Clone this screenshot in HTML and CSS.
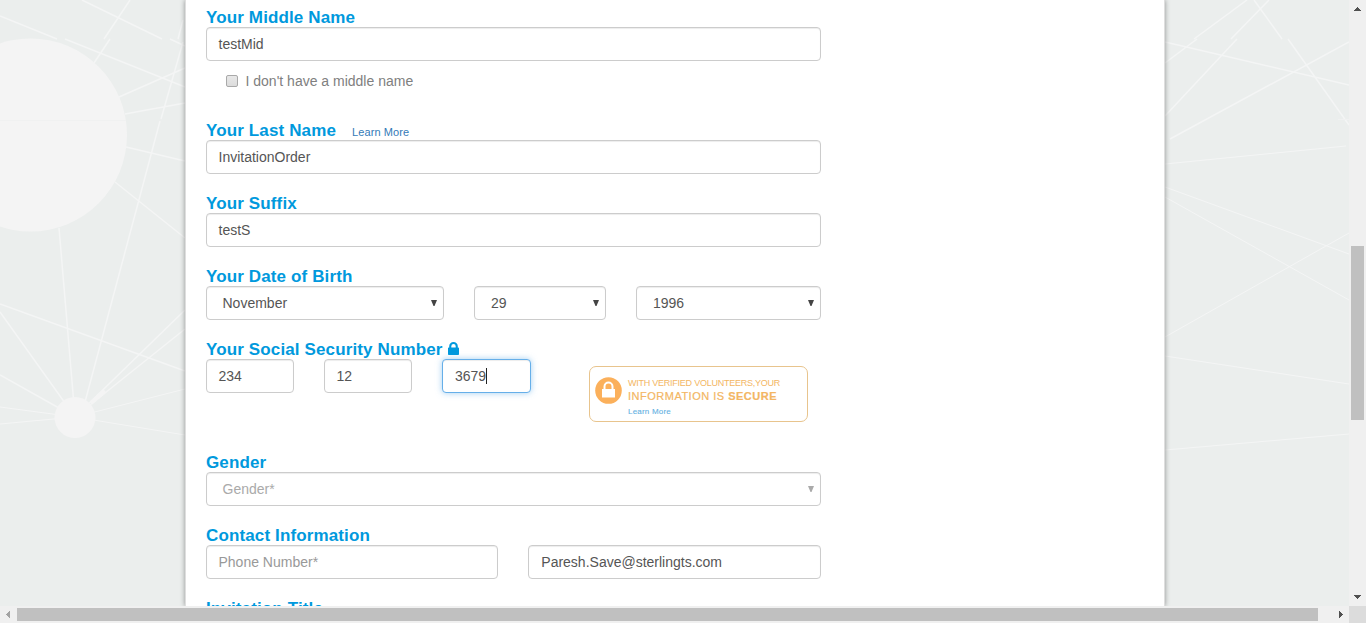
FILE: index.html
```html
<!DOCTYPE html>
<html lang="en">
<head>
<meta charset="utf-8">
<title>Your Information</title>
<link rel="stylesheet" href="styles.css">
</head>
<body>
<div class="window">
  <main class="viewport">
    <svg class="network" width="1349" height="606" viewBox="0 0 1349 606" aria-hidden="true">
      <g fill="none" stroke="#f4f5f5" stroke-width="1.5">
        <path d="M82 0 162 39M170 39 185 46M130 0 104 39M110 39 94 63M0 16 57 39M65 39 185 87M183 20 178 39M183 42 161 119M160 121 81 417M119 97 185 68M125 114 185 103M126 147 185 161M115 182 185 238M59 228 75 417M0 304 185 371M0 312 75 417M0 375 75 417M75 417 185 310M75 417 185 329"/>
        <path stroke-width="1" d="M0 407 75 417M0 424 75 417M75 417 185 389M75 417 185 435"/>
        <path d="M1247 0 1194 39M1197 39 1165 63M1269 0 1231 39M1237 39 1165 116M1254 0 1282 39M1288 39 1349 125M1165 42 1349 85M1349 42 1170 139"/>
        <path stroke-width="1" d="M1165 164 1346 146M1165 187 1349 254M1165 197 1349 300M1349 233 1165 337M1165 356 1349 384M1165 450 1349 434"/>
      </g>
      <path stroke="#f4f4f4" stroke-width="4" d="M91 403 105 391"/>
      <circle cx="30.500" cy="135" r="96.500" fill="#f4f4f4"/>
      <path stroke="#f0f1f1" d="M0 120.500H126M1338 119.500H1349"/>
      <circle cx="75" cy="417.500" r="20.500" fill="#f4f4f4"/>
    </svg>
    <section class="panel">
      <form class="form">
        <div class="group">
          <div class="label">Your Middle Name</div>
          <div class="control">testMid</div>
          <div class="check"><span class="box"></span><span>I don't have a middle name</span></div>
        </div>
        <div class="group">
          <div class="label"><span>Your Last Name</span><a class="learn">Learn More</a></div>
          <div class="control">InvitationOrder</div>
        </div>
        <div class="group">
          <div class="label">Your Suffix</div>
          <div class="control">testS</div>
        </div>
        <div class="group">
          <div class="label">Your Date of Birth</div>
          <div class="row">
            <div class="control select month"><span>November</span><svg class="arrow" viewBox="0 0 6 6"><path d="M0 0h6L3.500 6h-1z"/></svg></div>
            <div class="control select day"><span>29</span><svg class="arrow" viewBox="0 0 6 6"><path d="M0 0h6L3.500 6h-1z"/></svg></div>
            <div class="control select year"><span>1996</span><svg class="arrow" viewBox="0 0 6 6"><path d="M0 0h6L3.500 6h-1z"/></svg></div>
          </div>
        </div>
        <div class="group ssn-group">
          <div class="label"><span class="ssn-title">Your Social Security Number</span><svg class="lock" viewBox="0 0 11 13"><path fill="#0099dd" fill-rule="evenodd" d="M1.200 5.500V4.200a4.300 4.200 0 0 1 8.600 0v1.300h.4q.8 0 .8.800v5.900q0 .8-.8.800H.8Q0 13 0 12.200V6.300Q0 5.500.8 5.500zM3.300 5.500h4.400V4.200a2.200 2.200 0 0 0-4.400 0z"/></svg></div>
          <div class="row">
            <div class="control ssn">234</div>
            <div class="control ssn">12</div>
            <div class="control ssn focused"><span>3679</span><i class="caret"></i></div>
            <div class="secure">
              <svg class="badge" viewBox="0 0 27 27"><circle cx="13.500" cy="13.500" r="13.300" fill="#fbb05b"/><path fill="#fff" d="M7 12h13v8.500H7z"/><path fill="none" stroke="#fff" stroke-width="2" d="M9.500 12.500V9.500a4 4 0 0 1 8 0v3"/></svg>
              <div class="secure-text">
                <span class="secure-top">WITH VERIFIED VOLUNTEERS,YOUR</span>
                <span class="secure-main">INFORMATION IS <b>SECURE</b></span>
                <span class="secure-link">Learn More</span>
              </div>
            </div>
          </div>
        </div>
        <div class="group">
          <div class="label">Gender</div>
          <div class="control select muted"><span>Gender*</span><svg class="arrow" viewBox="0 0 6 6"><path d="M0 0h6L3.500 6h-1z"/></svg></div>
        </div>
        <div class="group">
          <div class="label">Contact Information</div>
          <div class="row">
            <div class="control phone placeholder">Phone Number*</div>
            <div class="control email">Paresh.Save@sterlingts.com</div>
          </div>
        </div>
        <div class="group">
          <div class="label">Invitation Title</div>
        </div>
      </form>
    </section>
  </main>
  <div class="scroll-y">
    <svg width="17" height="17"><path fill="#505050" shape-rendering="crispEdges" d="M5 11V10h1V9h1V8h1V7h1v1h1v1h1v1h1v1z"/></svg>
    <div class="thumb-y"></div>
    <svg width="17" height="17"><path fill="#505050" shape-rendering="crispEdges" d="M5 6h7v1h-1v1h-1v1H9v1H8V9H7V8H6V7H5z"/></svg>
  </div>
  <div class="scroll-x">
    <svg width="17" height="17"><path fill="#a3a3a3" shape-rendering="crispEdges" d="M10 5v7H9v-1H8v-1H7V9H6V8h1V7h1V6h1V5z"/></svg>
    <div class="thumb-x"></div>
    <svg width="17" height="17"><path fill="#505050" shape-rendering="crispEdges" d="M7 5v7h1v-1h1v-1h1V9h1V8h-1V7H9V6H8V5z"/></svg>
  </div>
  <div class="corner"></div>
</div>
</body>
</html>
```

FILE: styles.css
```css
* { box-sizing: border-box; }
body {
  margin: 0;
  overflow: hidden;
  font: 14px/20px "Liberation Sans", Arial, sans-serif;
  color: #555;
}
svg { display: block; }
.window {
  display: grid;
  grid-template: 606px 17px / 1349px 17px;
  width: 1366px;
  height: 623px;
}
.viewport {
  position: relative;
  overflow: hidden;
  height: 606px;
  background: #ebeeed;
}
.network { position: absolute; inset: 0; }
.panel {
  position: relative;
  width: 980px;
  height: 606px;
  margin-left: 185px;
  background: #fff;
  border: solid #dedede;
  border-width: 0 1px;
  box-shadow: 0 0 5px rgba(0, 0, 0, .4);
  overflow: hidden;
}
.form { width: 635px; padding: 7px 0 0 20px; }
.group { margin-bottom: 19px; }
.label {
  display: flex;
  align-items: center;
  height: 20px;
  padding-top: 1px;
  font-size: 17px;
  font-weight: bold;
  letter-spacing: .13px;
  color: #0099dd;
  white-space: nowrap;
}
.learn {
  margin: 3px 0 0 16px;
  font-size: 11px;
  font-weight: normal;
  letter-spacing: .1px;
  color: #337ab7;
}
.control {
  display: flex;
  align-items: center;
  height: 34px;
  padding: 0 11.5px;
  background: #fff;
  border: 1px solid #ccc;
  border-radius: 4px;
  box-shadow: inset 0 1px 1px rgba(0, 0, 0, .075);
  white-space: nowrap;
}
.check {
  display: flex;
  align-items: center;
  gap: 7.5px;
  height: 40px;
  padding-left: 20px;
  color: #808080;
}
.box {
  width: 12px;
  height: 12px;
  border: 1px solid #a9a9a9;
  border-radius: 2px;
  background: linear-gradient(#e8e8e8, #dcdcdc);
}
.row { display: flex; gap: 30px; }
.select { justify-content: space-between; padding: 0 6px 0 15.5px; }
.arrow { width: 6px; height: 6px; fill: #444; }
.month { width: 238px; }
.day { width: 132px; }
.year { width: 185px; }
.day, .year { padding-left: 16px; }
.muted { color: #aaa; }
.muted .arrow { fill: #aaa; }
.placeholder { color: #999; }
.phone { width: 292px; }
.email { width: 293px; padding-left: 12.3px; }
.ssn-group { height: 94px; }
.ssn { width: 88px; }
.ssn.focused {
  width: 89px;
  padding-left: 12px;
  border-color: #66afe9;
  box-shadow: inset 0 1px 1px rgba(0, 0, 0, .075), 0 0 6px rgba(102, 175, 233, .6);
}
.caret { width: 1px; height: 16px; background: #222; }
.lock { width: 11px; height: 13px; margin: -2px 0 0 5px; }
.secure {
  display: flex;
  width: 219px;
  height: 56px;
  margin: 7px 0 0 28px;
  padding: 10px 0 0 5px;
  gap: 6px;
  border: 1px solid #e8c48d;
  border-radius: 7px;
}
.badge { width: 27px; height: 27px; }
.secure-text { display: flex; flex-direction: column; white-space: nowrap; color: #f3b663; }
.secure-top { font-size: 9px; line-height: 13px; letter-spacing: -.24px; }
.secure-main { font-size: 11px; line-height: 13px; letter-spacing: .5px; -webkit-text-stroke: .2px #f3b663; }
.secure-link { font-size: 8px; line-height: 18px; letter-spacing: .2px; color: #62b0e2; -webkit-text-stroke: .1px #62b0e2; }
.scroll-y {
  display: flex;
  flex-direction: column;
  height: 606px;
  background: #f0f0f0;
}
.thumb-y { width: 13px; height: 174px; margin: 229px 0 169px 2px; background: #c0c0c0; }
.scroll-x { display: flex; background: #f0f0f0; }
.thumb-x { width: 1301px; height: 13px; margin: 2px 14px 0 0; background: #c0c0c0; }
.corner { background: #dcdcdc; }
```
